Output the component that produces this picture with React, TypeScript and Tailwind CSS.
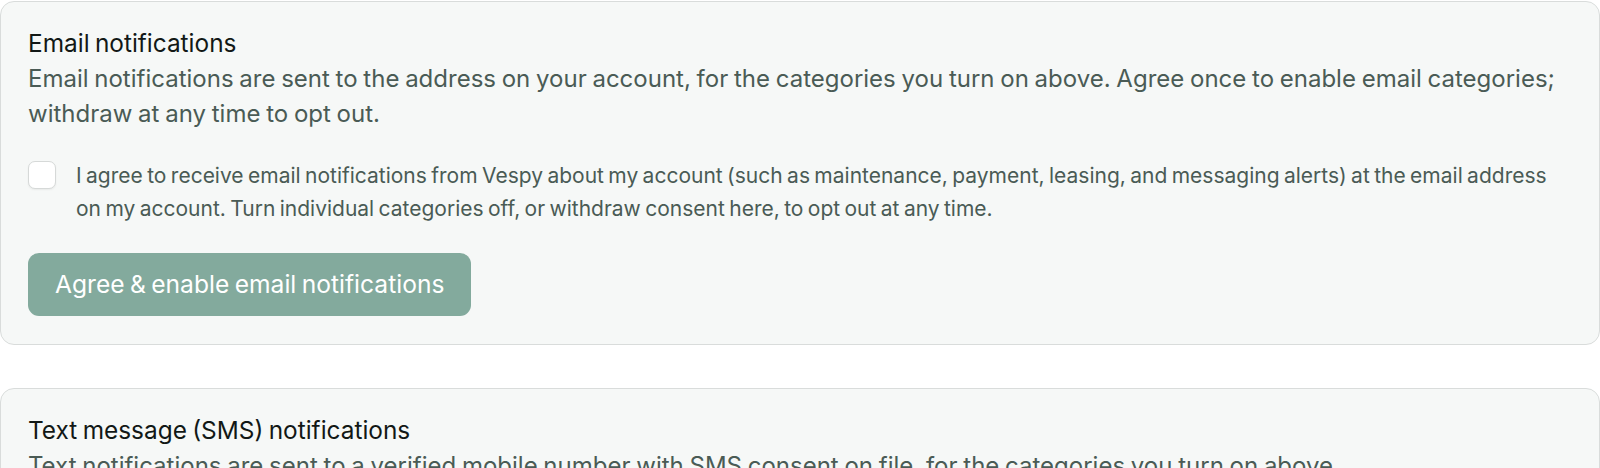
import React from "react";

function Card({ title, desc, label, button }: { title: string; desc: string; label: string; button: string }) {
  return (
    <div className="rounded-[14px] border border-[#d9dcdb] bg-[#f6f8f7] pl-[27px] pr-[27px] pt-[25px] pb-[28px]">
      <h2 className="text-[24.4px] leading-[32px] text-[#121816] [word-spacing:-1.5px]">{title}</h2>
      <p className="mt-[3px] text-[24px] leading-[34.5px] text-[#4a5b55] [word-spacing:-1px]">{desc}</p>
      <label className="mt-[28px] flex items-start gap-[20px]">
        <span className="mt-[2px] h-[28px] w-[28px] shrink-0 rounded-[7px] border border-[#d6d9d8] bg-white shadow-[0_1px_2px_rgba(0,0,0,0.06)]" />
        <span className="text-[21px] leading-[33px] text-[#4a5b55] [word-spacing:-1.5px]">{label}</span>
      </label>
      <button className="mt-[28px] h-[63px] rounded-[11px] bg-[#83aa9d] px-[27px] text-[24.6px] text-white [word-spacing:-1.5px]">
        {button}
      </button>
    </div>
  );
}

export default function App() {
  return (
    <div className="w-full bg-white pt-[1px]" style={{ fontFamily: "Inter, 'Noto Sans', sans-serif" }}>
      <Card
        title="Email notifications"
        desc="Email notifications are sent to the address on your account, for the categories you turn on above. Agree once to enable email categories; withdraw at any time to opt out."
        label="I agree to receive email notifications from Vespy about my account (such as maintenance, payment, leasing, and messaging alerts) at the email address on my account. Turn individual categories off, or withdraw consent here, to opt out at any time."
        button="Agree & enable email notifications"
      />
      <div className="mt-[43px]">
        <Card
          title="Text message (SMS) notifications"
          desc="Text notifications are sent to a verified mobile number with SMS consent on file, for the categories you turn on above."
          label="I agree to receive text message notifications from Vespy about my account at my verified mobile number. Message and data rates may apply. Reply STOP to opt out at any time."
          button="Agree & enable SMS notifications"
        />
      </div>
    </div>
  );
}
